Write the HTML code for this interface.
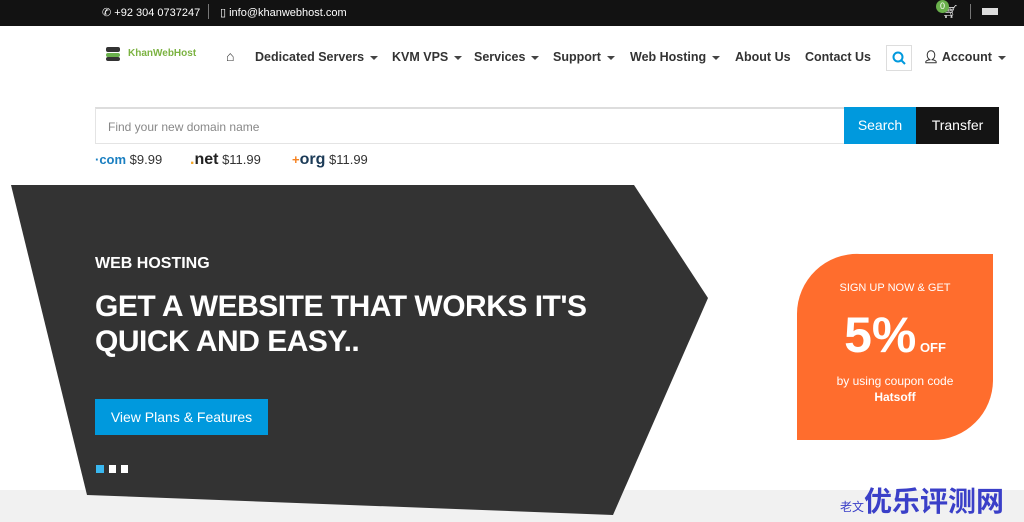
<!DOCTYPE html>
<html><head><meta charset="utf-8"><style>
*{margin:0;padding:0;box-sizing:border-box}
body{width:1024px;height:522px;overflow:hidden;background:#fff;font-family:"Liberation Sans",sans-serif;position:relative;color:#333}
.top{position:absolute;left:0;top:0;width:1024px;height:26px;background:#121212;color:#fff;font-size:11px}
.a{position:absolute}
.nav{position:absolute;top:50px;font-size:12.5px;font-weight:bold;color:#333;white-space:nowrap}
.car{display:inline-block;border-left:4px solid transparent;border-right:4px solid transparent;border-top:4px solid #444;margin-left:6px;vertical-align:middle}
</style></head><body>
<div class="top">
 <div class="a" style="left:102px;top:6px">✆ +92 304 0737247</div>
 <div class="a" style="left:208px;top:4px;width:1px;height:15px;background:#777"></div>
 <div class="a" style="left:220px;top:6px">▯ info@khanwebhost.com</div>
 <div class="a" style="left:936px;top:0;width:13px;height:13px;border-radius:50%;background:#6ab04c;font-size:9px;text-align:center;line-height:13px;z-index:2">0</div>
 <div class="a" style="left:942px;top:4px;font-size:13px">🛒︎</div>
 <div class="a" style="left:970px;top:4px;width:1px;height:15px;background:#777"></div>
 <div class="a" style="left:982px;top:8px;width:16px;height:7px;background:#ddd"></div>
</div>
<div class="a" style="left:98px;top:47px;width:24px;height:14px">
 <div class="a" style="left:8px;top:0;width:14px;height:5px;background:#333;border-radius:2px"></div>
 <div class="a" style="left:8px;top:6px;width:14px;height:4px;background:#6ab04c;border-radius:2px"></div>
 <div class="a" style="left:8px;top:10px;width:14px;height:4px;background:#333;border-radius:2px"></div>
</div>
<div class="a" style="left:128px;top:48px;font-size:10px;font-weight:bold;color:#7cb342">KhanWebHost</div>
<div class="nav" style="left:226px;font-size:14px;top:48px">⌂</div>
<div class="nav" style="left:255px">Dedicated Servers<span class="car"></span></div>
<div class="nav" style="left:392px">KVM VPS<span class="car"></span></div>
<div class="nav" style="left:474px">Services<span class="car"></span></div>
<div class="nav" style="left:553px">Support<span class="car"></span></div>
<div class="nav" style="left:630px">Web Hosting<span class="car"></span></div>
<div class="nav" style="left:735px">About Us</div>
<div class="nav" style="left:805px">Contact Us</div>
<div class="a" style="left:886px;top:45px;width:26px;height:26px;border:1px solid #ddd">
 <svg width="24" height="24"><circle cx="11" cy="11" r="4.5" fill="none" stroke="#0099dd" stroke-width="2"/><line x1="14" y1="14" x2="18" y2="18" stroke="#0099dd" stroke-width="2"/></svg>
</div>
<div class="nav" style="left:923px">👤︎ Account<span class="car"></span></div>
<div class="a" style="left:95px;top:107px;width:750px;height:37px;border:1px solid #e4e4e4;border-top:2px solid #ddd;font-size:12px;color:#888;padding:11px 12px">Find your new domain name</div>
<div class="a" style="left:844px;top:107px;width:72px;height:37px;background:#0099dd;color:#fff;font-size:14px;text-align:center;line-height:37px">Search</div>
<div class="a" style="left:916px;top:107px;width:83px;height:37px;background:#141414;color:#fff;font-size:14px;text-align:center;line-height:37px">Transfer</div>
<div class="a" style="left:95px;top:152px;font-size:13px"><b style="color:#1a7fc1">·com</b> $9.99</div>
<div class="a" style="left:190px;top:151px;font-size:13px"><b style="color:#222;font-size:16px"><span style="color:#f5a623">.</span>net</b> $11.99</div>
<div class="a" style="left:292px;top:151px;font-size:13px"><b style="color:#f58220">+</b><b style="color:#1c3b57;font-size:16px">org</b> $11.99</div>
<div class="a" style="left:0;top:490px;width:1024px;height:32px;background:#f1f1f1"></div>
<svg class="a" style="left:0;top:0" width="1024" height="522"><polygon points="11,185 634,185 708,298 613,515 87,495" fill="#333"/>
<path d="M860,254 H993 V380 A60,60 0 0 1 933,440 H797 V314 A60,60 0 0 1 860,254Z" fill="#ff6d2d"/></svg>
<div class="a" style="left:95px;top:255px;color:#fff;font-weight:bold;font-size:16px">WEB HOSTING</div>
<div class="a" style="left:95px;top:289px;color:#fff;font-weight:bold;font-size:30px;line-height:35px;letter-spacing:-0.5px">GET A WEBSITE THAT WORKS IT'S<br>QUICK AND EASY..</div>
<div class="a" style="left:95px;top:399px;width:173px;height:36px;background:#0099dd;color:#fff;font-size:14px;text-align:center;line-height:36px">View Plans &amp; Features</div>
<div class="a" style="left:96px;top:465px;width:8px;height:8px;background:#3ab8f0"></div>
<div class="a" style="left:109px;top:465px;width:7px;height:8px;background:#fff"></div>
<div class="a" style="left:121px;top:465px;width:7px;height:8px;background:#fff"></div>
<div class="a" style="left:797px;top:282px;width:196px;text-align:center;color:#fff;font-size:11px">SIGN UP NOW &amp; GET</div>
<div class="a" style="left:797px;top:305px;width:196px;text-align:center;color:#fff;font-weight:bold"><span style="font-size:50px;line-height:60px">5%</span><span style="font-size:13px"> OFF</span></div>
<div class="a" style="left:797px;top:373px;width:196px;text-align:center;color:#fff;font-size:12px;line-height:16px">by using coupon code<br><b>Hatsoff</b></div>
<div class="a" style="left:840px;top:480px;font-family:'Liberation Sans','Noto Sans CJK SC',sans-serif;font-size:28px;font-weight:bold;color:#3a3fc8;white-space:nowrap"><span style="font-size:12px;font-weight:normal">老文</span>优乐评测网</div>
</body></html>
